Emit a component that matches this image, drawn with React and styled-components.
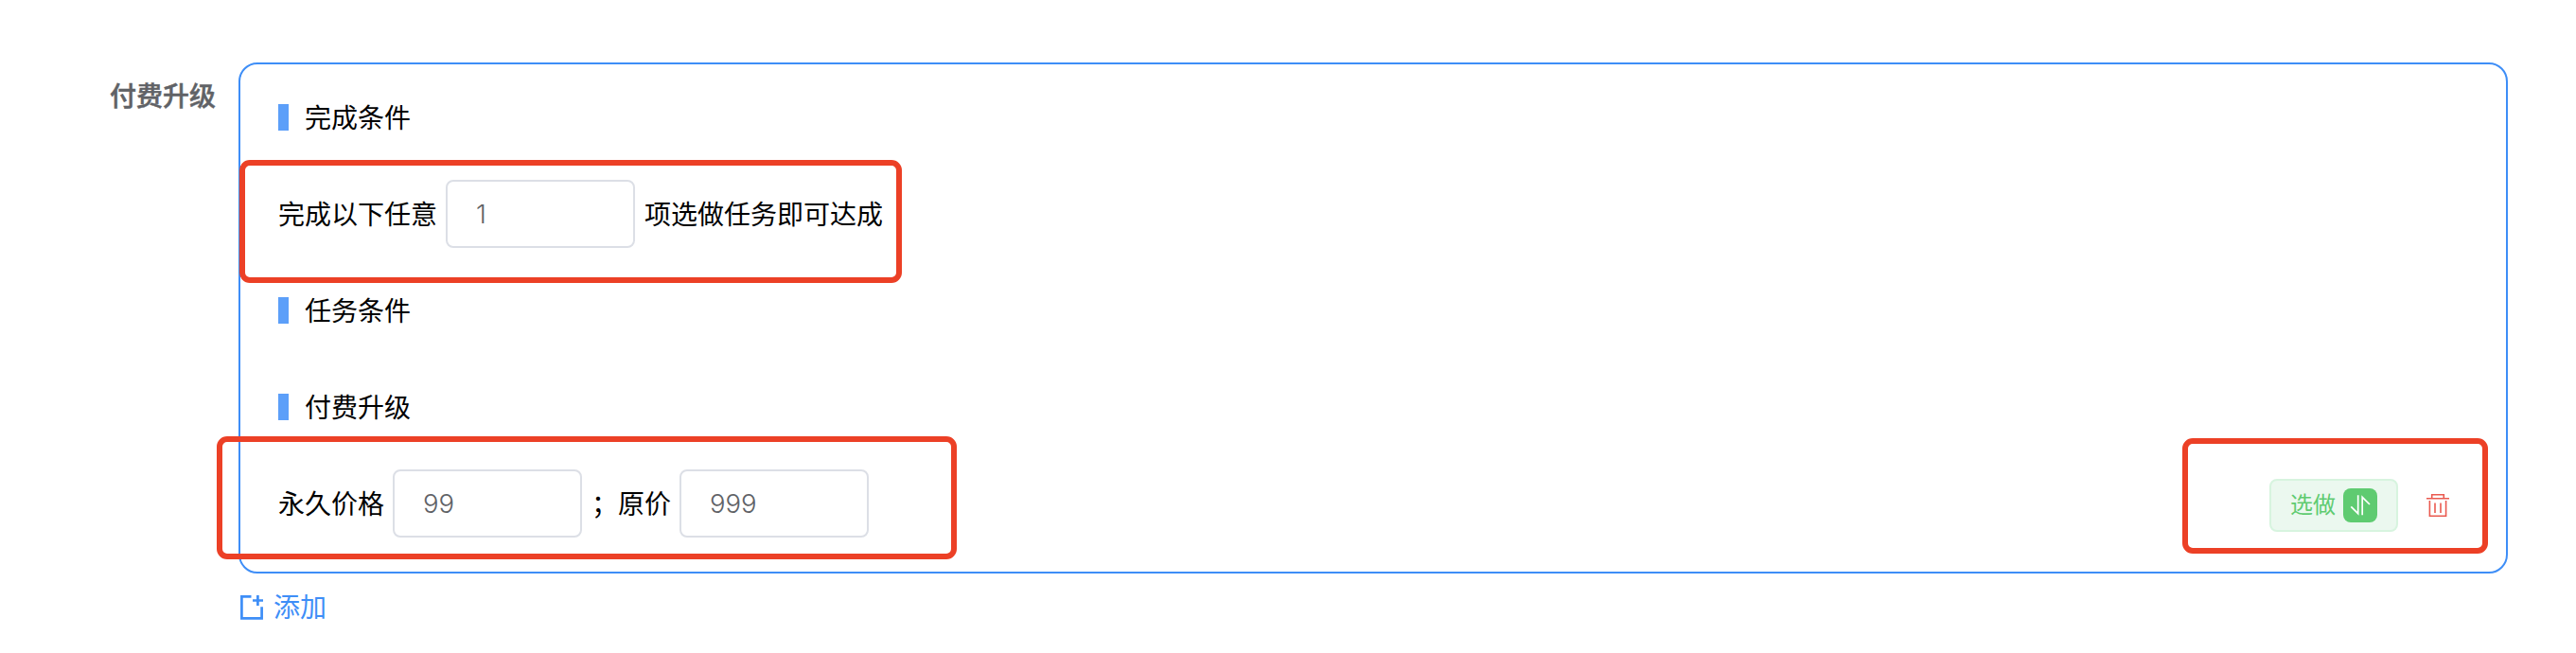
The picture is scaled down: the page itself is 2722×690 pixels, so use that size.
import React, { useState } from 'react'
import styled, { createGlobalStyle } from 'styled-components'


const GlobalStyle = createGlobalStyle`
  * {
    box-sizing: border-box;
  }

  body {
    margin: 0;
    background: #fff;
    color: #000;
    font-family: "Noto Sans CJK SC", sans-serif;
    font-size: 28px;
    line-height: 40px;
  }
`

const Page = styled.main`
  position: relative;
  display: flex;
  height: 690px;
  padding: 66px 72px 0 116px;
`

const FormLabel = styled.div`
  width: 136px;
  padding-top: 14px;
  color: #606266;
  font-weight: 500;
  -webkit-text-stroke: 0.5px #606266;
`

const Content = styled.div`
  flex: 1;
`

const Panel = styled.section`
  height: 540px;
  padding: 5px 40px;
  border: 2px solid #3e8ef7;
  border-radius: 20px;
`

const Row = styled.div`
  display: flex;
  align-items: center;
  height: 102px;
  white-space: nowrap;
`

const Text = styled.span`
  padding-bottom: ${({ $lift }) => $lift || 2}px;
`

const Bar = styled.span`
  width: 11px;
  height: 28px;
  margin-right: 17px;
  background: #5c9ff9;
`

const NumberInput = styled.input`
  width: 200px;
  height: 72px;
  margin: 0 10px 0 9px;
  padding: 0 30px 1px;
  border: 2px solid #dcdfe6;
  border-radius: 8px;
  outline: none;
  background: #fff;
  color: #606266;
  font-family: Inter, sans-serif;
  font-size: 27.5px;
  font-weight: 300;
`

const Actions = styled.div`
  display: flex;
  align-items: center;
  margin: 4px 20px 0 auto;
`

const Tag = styled.div`
  display: flex;
  align-items: center;
  justify-content: space-between;
  width: 136px;
  height: 56px;
  padding: 0 20px;
  border: 2px solid #d7f4df;
  border-radius: 8px;
  background: #ebf8ef;
  color: #5fcb71;
  font-size: 24px;
`

const SwitchButton = styled.button`
  display: flex;
  width: 36px;
  height: 36px;
  padding: 0;
  border: none;
  border-radius: 8px;
  background: #5fcb71;
  cursor: pointer;
`

const DeleteButton = styled.button`
  display: flex;
  margin-left: 30px;
  padding: 0;
  border: none;
  background: none;
  cursor: pointer;
`

const AddButton = styled.button`
  display: flex;
  align-items: center;
  margin-top: 14px;
  padding: 0 0 0 2px;
  border: none;
  background: none;
  color: #3e8ef7;
  font: inherit;
  cursor: pointer;

  svg {
    margin-right: 11px;
  }
`

// red frames that lie over the form
const Mark = styled.div`
  position: absolute;
  left: ${({ $x }) => $x}px;
  top: ${({ $y }) => $y}px;
  width: ${({ $w }) => $w}px;
  height: ${({ $h }) => $h}px;
  border: 6px solid #ec4026;
  border-radius: 11px;
  pointer-events: none;
`


function SwitchIcon(){
  return(
    <svg width="36" height="36" viewBox="0 0 36 36" fill="none" stroke="#fff" strokeWidth="1.7">
      <path d="M8.3 19.3L15.7 26.6V7.3" />
      <path d="M20.2 28.3V9.3L28 17" />
    </svg>
  )
}

function TrashIcon(){
  return(
    <svg width="24" height="24" viewBox="0 0 24 24" fill="none" stroke="#ea5a50" strokeWidth="1.6">
      <path d="M0 4.7H24M5.7 4.7V.8H18.3V4.7M3.4 7V23.2H20.6V7" />
      <path d="M9 9.5V20M15 9.5V20" />
    </svg>
  )
}

function AddIcon(){
  return(
    <svg width="24" height="26" viewBox="0 0 24 26" fill="none" stroke="currentColor" strokeWidth="2.7">
      <path d="M11.5 1.4H1.4V24.4H22.6V12.3" />
      <path d="M13 5.5H24M18.4 0V11" />
    </svg>
  )
}

function Heading({ children }){
  return(
    <Row><Bar /><Text>{children}</Text></Row>
  )
}

function App(){
  const [count,setCount] = useState("1")
  const [price,setPrice] = useState("99")
  const [originalPrice,setOriginalPrice] = useState("999")

  return(
    <Page>
      <GlobalStyle />
      <FormLabel>付费升级</FormLabel>
      <Content>
        <Panel>
          <Heading>完成条件</Heading>
          <Row>
            <Text>完成以下任意</Text>
            <NumberInput value={count} onChange={event=>setCount(event.target.value)} />
            <Text>项选做任务即可达成</Text>
          </Row>
          <Heading>任务条件</Heading>
          <Heading>付费升级</Heading>
          <Row>
            <Text>永久价格</Text>
            <NumberInput value={price} onChange={event=>setPrice(event.target.value)} />
            <Text>；原价</Text>
            <NumberInput value={originalPrice} onChange={event=>setOriginalPrice(event.target.value)} />
            <Actions>
              <Tag><Text $lift={4}>选做</Text><SwitchButton><SwitchIcon /></SwitchButton></Tag>
              <DeleteButton><TrashIcon /></DeleteButton>
            </Actions>
          </Row>
        </Panel>
        <AddButton><AddIcon /><Text $lift={4}>添加</Text></AddButton>
      </Content>
      <Mark $x={253} $y={169} $w={700} $h={130} />
      <Mark $x={229} $y={461} $w={782} $h={130} />
      <Mark $x={2306} $y={463} $w={323} $h={122} />
    </Page>
  )
}

export default App
